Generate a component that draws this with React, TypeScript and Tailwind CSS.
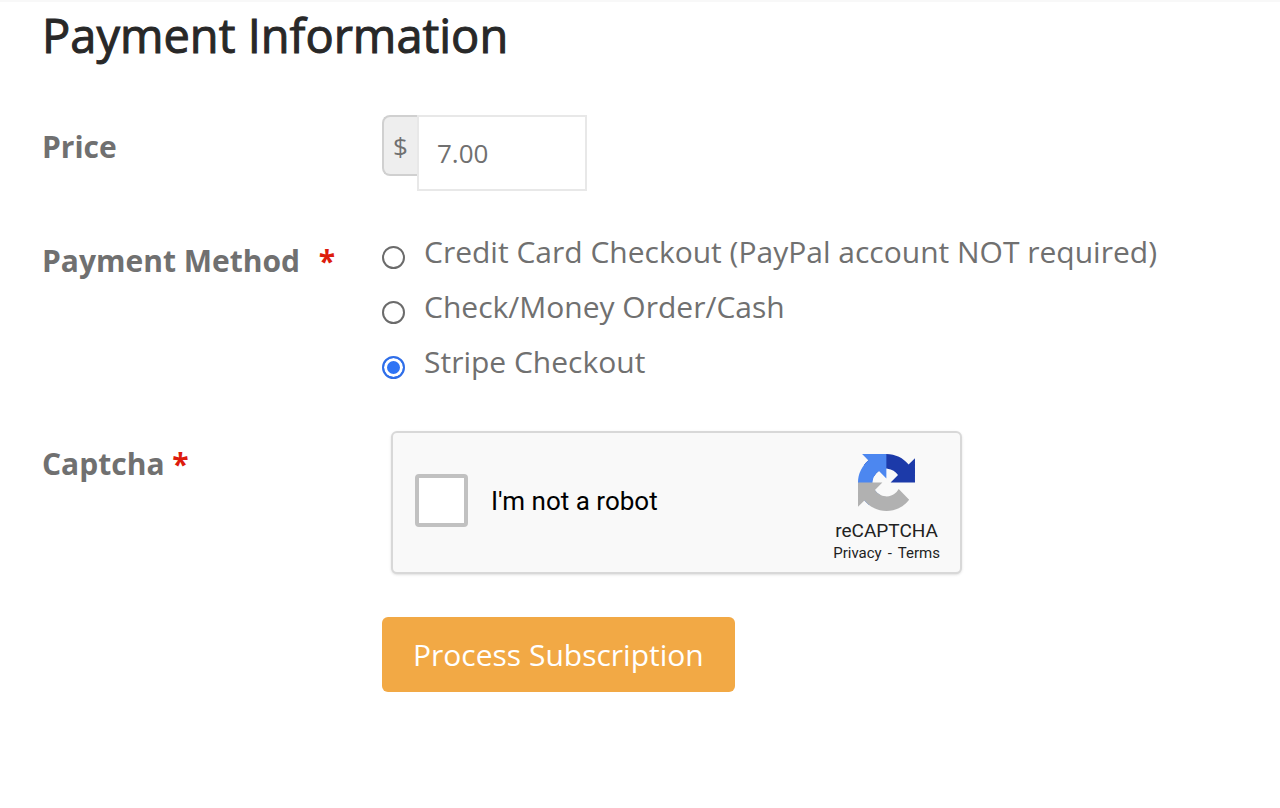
import { useState } from 'react'

const paymentMethods = [
  { id: 'card', label: 'Credit Card Checkout (PayPal account NOT required)' },
  { id: 'check', label: 'Check/Money Order/Cash' },
  { id: 'stripe', label: 'Stripe Checkout' },
]

const Required = () => <span className="text-[#dd1c0d]">*</span>

const RecaptchaLogo = () => (
  <svg viewBox="0 0 64 64" className="size-[57px]" aria-hidden="true">
    <path
      fill="#1c3aa9"
      d="M64 31.955l-.033-1.37V4.687l-7.16 7.16C50.902 4.674 41.984.093 31.997.093c-10.4 0-19.638 4.96-25.49 12.64l11.736 11.86a15.55 15.55 0 0 1 4.754-5.334c2.05-1.6 4.952-2.906 8.968-2.906.485 0 .86.057 1.135.163 4.976.393 9.288 3.14 11.828 7.124l-8.307 8.307L64 31.953"
    />
    <path
      fill="#4c87f0"
      d="M31.862.094l-1.37.033H4.594l7.16 7.16C4.58 13.147 0 22.065 0 32.052c0 10.4 4.96 19.638 12.64 25.49L24.5 45.807a15.55 15.55 0 0 1-5.334-4.754c-1.6-2.05-2.906-4.952-2.906-8.968 0-.485.057-.86.163-1.135.393-4.976 3.14-9.288 7.124-11.828l8.307 8.307L31.86.095"
    />
    <path
      fill="#b1b1b1"
      d="M.001 32.045l.033 1.37v25.898l7.16-7.16c5.86 7.173 14.774 11.754 24.76 11.754 10.4 0 19.638-4.96 25.49-12.64l-11.736-11.86a15.55 15.55 0 0 1-4.754 5.334c-2.05 1.6-4.952 2.906-8.968 2.906-.485 0-.86-.057-1.135-.163-4.976-.393-9.288-3.14-11.828-7.124l8.307-8.307c-10.522.04-22.4.066-27.295-.005"
    />
  </svg>
)

const Recaptcha = () => (
  <div className="ml-[9px] flex h-[143px] max-w-[571px] items-center rounded-md border-2 border-[#d8d8d8] bg-[#f9f9f9] pr-5 pl-[22px] font-['Roboto',sans-serif] text-black shadow-sm">
    <div className="flex flex-1 items-center gap-[23px] pb-1">
      <input
        id="captcha"
        type="checkbox"
        className="size-[53px] shrink-0 appearance-none rounded-[4px] border-4 border-[#c1c1c1] bg-white checked:bg-[#4c87f0]"
      />
      <label htmlFor="captcha" className="text-[26px] leading-8">
        I'm not a robot
      </label>
    </div>
    <div className="flex flex-col items-center pt-3">
      <RecaptchaLogo />
      <span className="mt-2 text-[19px] leading-6 text-[#222]">reCAPTCHA</span>
      <span className="text-[15px] leading-5 text-[#222]">
        <a href="#privacy">Privacy</a>
        <span className="mx-1.5">-</span>
        <a href="#terms">Terms</a>
      </span>
    </div>
  </div>
)

export default function App() {
  const [price, setPrice] = useState('7.00')
  const [method, setMethod] = useState('stripe')

  return (
    <main className="min-h-screen border-t-2 border-[#f8f8f8] bg-white px-[42px] pb-10 font-['Open_Sans',sans-serif] text-[30px] leading-10 text-[#707070]">
      <h1 className="pt-0.5 text-[47px] leading-[62px] font-medium text-[#282828] [-webkit-text-stroke:1px]">
        Payment Information
      </h1>

      <form
        onSubmit={(e) => e.preventDefault()}
        className="mt-[49px] grid grid-cols-[340px_1fr]"
      >
        <label htmlFor="price" className="pt-3 font-bold">
          Price
        </label>
        <div className="flex items-start text-[26px]">
          <span className="flex h-[61px] w-[35px] items-center justify-center rounded-l-lg border-2 border-r-0 border-[#d0d0d0] bg-[#eee]">
            $
          </span>
          <input
            id="price"
            type="text"
            value={price}
            onChange={(e) => setPrice(e.target.value)}
            className="h-[76px] w-[170px] border-2 border-[#e8e8e8] bg-white px-[18px] outline-none"
          />
        </div>

        <span id="method-label" className="pt-[50px] font-bold">
          Payment Method <span className="ml-[11px]"><Required /></span>
        </span>
        <div
          role="radiogroup"
          aria-labelledby="method-label"
          className="flex flex-col gap-[15px] pt-[41px]"
        >
          {paymentMethods.map((m) => (
            <label key={m.id} className="flex items-start gap-[19px]">
              <input
                type="radio"
                name="method"
                value={m.id}
                checked={method === m.id}
                onChange={() => setMethod(m.id)}
                className="mt-[14px] size-[23px] shrink-0 appearance-none rounded-full border-2 border-[#6b6b6b] bg-white checked:border-[#2f6ee8] checked:bg-[#2f74f5] checked:shadow-[inset_0_0_0_3px_white]"
              />
              {m.label}
            </label>
          ))}
        </div>

        <label htmlFor="captcha" className="pt-[62px] font-bold">
          Captcha <Required />
        </label>
        <div className="pt-[49px]">
          <Recaptcha />
          <button
            type="submit"
            className="mt-[43px] h-[75px] rounded-md bg-[#f2a945] px-[31px] text-white"
          >
            Process Subscription
          </button>
        </div>
      </form>
    </main>
  )
}
